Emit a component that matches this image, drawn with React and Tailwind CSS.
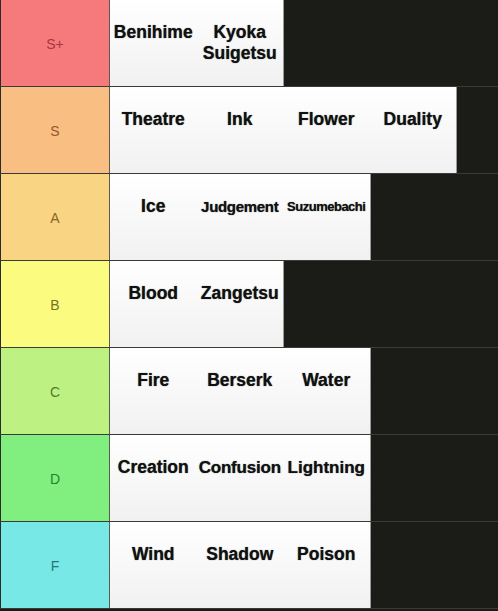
const tiers = [
  { label: "S+", bg: "bg-[#f67a7c]", text: "text-[#a8363b]", items: ["Benihime", "Kyoka Suigetsu"] },
  { label: "S", bg: "bg-[#f9be82]", text: "text-[#94562a]", items: ["Theatre", "Ink", "Flower", "Duality"] },
  { label: "A", bg: "bg-[#f9d583]", text: "text-[#86662a]", items: ["Ice", "Judgement", "Suzumebachi"] },
  { label: "B", bg: "bg-[#fbfb80]", text: "text-[#747420]", items: ["Blood", "Zangetsu"] },
  { label: "C", bg: "bg-[#bdf282]", text: "text-[#4e7a32]", items: ["Fire", "Berserk", "Water"] },
  { label: "D", bg: "bg-[#80ef7f]", text: "text-[#23852a]", items: ["Creation", "Confusion", "Lightning"] },
  { label: "F", bg: "bg-[#78e8e6]", text: "text-[#2a7474]", items: ["Wind", "Shadow", "Poison"] },
];

// tiermaker shrinks long names to fit the tile
const sizeFor = {
  Judgement: "text-[15px] tracking-[-0.3px]",
  Suzumebachi: "text-[13px] tracking-[-0.5px]",
  Confusion: "text-[17px] tracking-[-0.2px]",
  Lightning: "text-[17px]",
};

function Tile({ name }) {
  return (
    <div className="w-[86.5px] shrink-0 flex justify-center pt-[22px]">
      <span
        className={`text-center font-bold leading-[21px] text-[#111] [text-shadow:0_0_1px_rgba(0,0,0,0.7)] ${sizeFor[name] || "text-[17.5px]"}`}
      >
        {name}
      </span>
    </div>
  );
}

export default function App() {
  return (
    <div
      className="w-[498px] h-[611px] bg-[#1b1b18] overflow-hidden"
      style={{ fontFamily: '"Liberation Sans", Arial, sans-serif' }}
    >
      {tiers.map((t) => (
        <div key={t.label} className="flex h-[87px] border-b border-[#3a3a37]">
          <div
            className={`w-[110px] shrink-0 flex items-center justify-center border-r border-[#5a5a50] border-l border-l-[#2a2a28] ${t.bg}`}
          >
            <span className={`text-[14px] pt-[2px] ${t.text}`}>{t.label}</span>
          </div>
          <div className="flex bg-gradient-to-b from-white to-[#f1f1f1] border-r border-[#9a9a9a]">
            {t.items.map((it) => (
              <Tile key={it} name={it} />
            ))}
          </div>
        </div>
      ))}
    </div>
  );
}
